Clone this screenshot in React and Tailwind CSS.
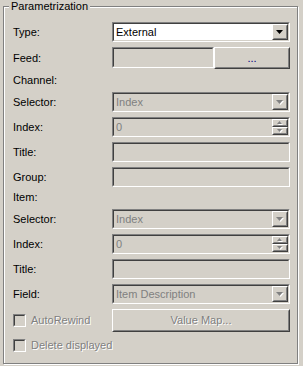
import React from "react";

const FONT = { fontFamily: '"Liberation Sans", Arial, sans-serif' };

function Sunken({ className = "", inner = "bg-[#d4d0c8]", children }) {
  return (
    <div
      className={`border border-t-[#808080] border-l-[#808080] border-b-white border-r-white ${className}`}
    >
      <div
        className={`flex h-full w-full items-center border border-t-[#404040] border-l-[#404040] border-b-[#d4d0c8] border-r-[#d4d0c8] ${inner}`}
      >
        {children}
      </div>
    </div>
  );
}

function Raised({ className = "", children }) {
  return (
    <div
      className={`border border-t-white border-l-white border-b-[#404040] border-r-[#404040] bg-[#d4d0c8] ${className}`}
    >
      <div className="flex h-full w-full items-center justify-center border border-t-[#d4d0c8] border-l-[#d4d0c8] border-b-[#808080] border-r-[#808080]">
        {children}
      </div>
    </div>
  );
}

function Arrow({ disabled, up, small }) {
  const w = small ? 5 : 7;
  const h = small ? 3 : 4;
  const pts = up
    ? `0,${h} ${w},${h} ${w / 2},0`
    : `0,0 ${w},0 ${w / 2},${h}`;
  return (
    <svg width={w + 1} height={h + 1} viewBox={`0 0 ${w + 1} ${h + 1}`}>
      {disabled && <polygon points={pts} fill="#ffffff" transform="translate(1,1)" />}
      <polygon points={pts} fill={disabled ? "#808080" : "#000000"} />
    </svg>
  );
}

function Combo({ value, disabled }) {
  return (
    <Sunken className="h-[20px] w-[178px]" inner={disabled ? "bg-[#d4d0c8]" : "bg-white"}>
      <span
        className={`flex-1 truncate pl-[2px] text-[11px] leading-none ${
          disabled ? "text-[#808080]" : "text-black"
        }`}
      >
        {value}
      </span>
      <Raised className="h-[16px] w-[16px] shrink-0">
        <Arrow disabled={disabled} />
      </Raised>
    </Sunken>
  );
}

function Spin({ value }) {
  return (
    <Sunken className="h-[20px] w-[178px]">
      <span className="flex-1 pl-[2px] text-[11px] leading-none text-[#808080]">{value}</span>
      <div className="flex h-[16px] w-[16px] shrink-0 flex-col">
        <Raised className="h-[8px] w-[16px]">
          <Arrow disabled up small />
        </Raised>
        <Raised className="h-[8px] w-[16px]">
          <Arrow disabled small />
        </Raised>
      </div>
    </Sunken>
  );
}

function Row({ label, className = "", children }) {
  return (
    <div className={`flex h-[20px] items-center ${className}`}>
      <span className="w-[99px] text-[11px] text-black">{label}</span>
      {children}
    </div>
  );
}

function Check({ label, className = "" }) {
  return (
    <div className={`flex items-center ${className}`}>
      <Sunken className="h-[13px] w-[13px]" />
      <span className="ml-[5px] text-[11px] text-[#808080] [text-shadow:1px_1px_0_#ffffff]">
        {label}
      </span>
    </div>
  );
}

export default function App() {
  return (
    <div className="h-[366px] w-[303px] overflow-hidden bg-[#d4d0c8]" style={FONT}>
      <fieldset className="ml-[3px] h-[364px] w-[295px] border border-[#808080] p-0 shadow-[inset_1px_1px_0_#ffffff,1px_1px_0_#ffffff]">
        <legend className="ml-[5px] bg-[#d4d0c8] px-[2px] text-[11px] leading-[13px] text-black">
          Parametrization
        </legend>
        <div className="flex flex-col pl-[9px] pt-[9px]">
          <Row label="Type:">
            <Combo value="External" />
          </Row>
          <div className="mt-[5px] flex h-[22px] items-start">
            <span className="mt-[3px] w-[99px] text-[11px] text-black">Feed:</span>
            <Sunken className="h-[21px] w-[102px]" />
            <Raised className="h-[22px] w-[76px]">
              <span className="text-[11px] leading-none text-[#000080]">...</span>
            </Raised>
          </div>
          <div className="mt-[3px] flex h-[16px] items-center text-[11px] text-black">Channel:</div>
          <Row label="Selector:" className="mt-[4px]">
            <Combo value="Index" disabled />
          </Row>
          <Row label="Index:" className="mt-[5px]">
            <Spin value="0" />
          </Row>
          <Row label="Title:" className="mt-[5px]">
            <Sunken className="h-[20px] w-[178px]" />
          </Row>
          <Row label="Group:" className="mt-[5px]">
            <Sunken className="h-[20px] w-[178px]" />
          </Row>
          <div className="mt-[2px] flex h-[16px] items-center text-[11px] text-black">Item:</div>
          <Row label="Selector:" className="mt-[4px]">
            <Combo value="Index" disabled />
          </Row>
          <Row label="Index:" className="mt-[5px]">
            <Spin value="0" />
          </Row>
          <Row label="Title:" className="mt-[5px]">
            <Sunken className="h-[20px] w-[178px]" />
          </Row>
          <Row label="Field:" className="mt-[5px]">
            <Combo value="Item Description" disabled />
          </Row>
          <div className="mt-[5px] flex h-[23px] items-center">
            <Check label="AutoRewind" className="w-[99px]" />
            <Raised className="h-[23px] w-[178px]">
              <span className="text-[11px] leading-none text-[#808080] [text-shadow:1px_1px_0_#ffffff]">
                Value Map...
              </span>
            </Raised>
          </div>
          <Check label="Delete displayed" className="mt-[4px] h-[19px]" />
        </div>
      </fieldset>
    </div>
  );
}
